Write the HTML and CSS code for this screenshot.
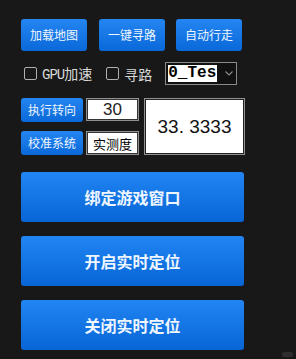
FILE: index.html
```html
<!DOCTYPE html>
<html>
<head>
<meta charset="utf-8">
<link rel="stylesheet" href="styles.css">
</head>
<body>
<div class="panel">
  <div class="row top">
    <button class="btn sm">加载地图</button>
    <button class="btn sm">一键寻路</button>
    <button class="btn sm last">自动行走</button>
  </div>
  <div class="row opts">
    <label class="chk"><span class="box"></span><span class="lbl"><span class="mono">GPU</span>加速</span></label>
    <label class="chk second"><span class="box"></span><span class="lbl">寻路</span></label>
    <div class="select"><span class="sel-val">0_Test</span><svg class="chev" width="8" height="5" viewBox="0 0 8 5"><path d="M0.5 0.5 L4 4 L7.5 0.5" fill="none" stroke="#8c8c8c" stroke-width="1.1"/></svg></div>
  </div>
  <div class="grid">
    <button class="btn xs">执行转向</button>
    <div class="field num">30</div>
    <div class="bigbox">33. 3333</div>
    <button class="btn xs">校准系统</button>
    <div class="field txt">实测度</div>
  </div>
  <div class="bigs">
    <button class="btn big">绑定游戏窗口</button>
    <button class="btn big">开启实时定位</button>
    <button class="btn big">关闭实时定位</button>
  </div>
</div>
<div class="mark"></div>
</body>
</html>
```
FILE: styles.css
```css
*, *::before, *::after { box-sizing: border-box; }
html, body {
  margin: 0;
  padding: 0;
  background: #181818;
  width: 296px;
  height: 359px;
  overflow: hidden;
}
body {
  font-family: "Noto Sans CJK SC", "Liberation Sans", sans-serif;
  position: relative;
}
.panel {
  padding: 19px 0 0 21px;
}
.row {
  display: flex;
  align-items: center;
}
.btn {
  border: none;
  margin: 0;
  padding: 0;
  color: #eef6ff;
  background: linear-gradient(#2486f2, #0a68d8);
  border-radius: 3px;
  font-family: "Noto Sans CJK SC", sans-serif;
  cursor: pointer;
  display: flex;
  align-items: center;
  justify-content: center;
  line-height: 1;
}
.btn.sm {
  width: 66px;
  height: 32px;
  font-size: 12px;
  margin-right: 12px;
}
.btn.sm.last { margin-left: -1px; }
.opts {
  margin-top: 11px;
  height: 23px;
}
.chk {
  display: flex;
  align-items: center;
  color: #d8d8d8;
  font-size: 14px;
  line-height: 1;
}
.chk:first-child { margin-left: 3px; }
.box {
  width: 13px;
  height: 13px;
  border: 1px solid #b0b0b0;
  border-radius: 2px;
  margin-right: 5px;
}
.mono {
  font-family: "Liberation Mono", monospace;
  font-size: 14px;
  letter-spacing: -1px;
}
.second { margin-left: 14px; }
.select {
  margin-left: 13px;
  width: 72px;
  height: 23px;
  border: 1px solid #8a8a8a;
  background: #111;
  display: flex;
  align-items: center;
}
.sel-val {
  margin-left: 2px;
  width: 49px;
  height: 17px;
  background: #fff;
  color: #000;
  font-family: "Liberation Mono", monospace;
  font-weight: bold;
  font-size: 16px;
  line-height: 17px;
  overflow: hidden;
  white-space: nowrap;
}
.chev {
  margin-left: 8px;
}
.grid {
  margin-top: 13px;
  display: grid;
  grid-template-columns: auto auto auto;
  justify-content: start;
  grid-template-rows: 24px 24px;
  row-gap: 9px;
}
.btn.xs {
  width: 62px;
  height: 24px;
  font-size: 12px;
}
.field {
  margin-left: 3px;
  width: 53px;
  height: 24px;
  background: #fff;
  border: 1px solid #909090;
  box-shadow: inset 0 0 0 1px #333;
  color: #000;
  display: flex;
  align-items: center;
  justify-content: center;
}
.field.num {
  font-family: "Liberation Sans", sans-serif;
  font-size: 17px;
  color: #222;
  height: 23px;
}
.field.txt {
  font-size: 13px;
}
.bigbox {
  grid-column: 3;
  grid-row: 1 / span 2;
  margin-left: 5px;
  width: 101px;
  height: 57px;
  background: #fff;
  border: 1px solid #909090;
  box-shadow: inset 0 0 0 1px #222;
  color: #111;
  font-family: "Liberation Sans", sans-serif;
  font-size: 19px;
  display: flex;
  align-items: center;
  justify-content: center;
}
.bigs {
  margin-top: 17px;
  display: flex;
  flex-direction: column;
  gap: 14px;
}
.btn.big {
  width: 223px;
  height: 50px;
  font-size: 16px;
  font-weight: bold;
  background: linear-gradient(#2185f2, #0865d6);
}
.mark {
  position: absolute;
  left: 282px;
  top: 352px;
  width: 11px;
  height: 5px;
  border-radius: 2px;
  background: #2e2e2e;
}
```
